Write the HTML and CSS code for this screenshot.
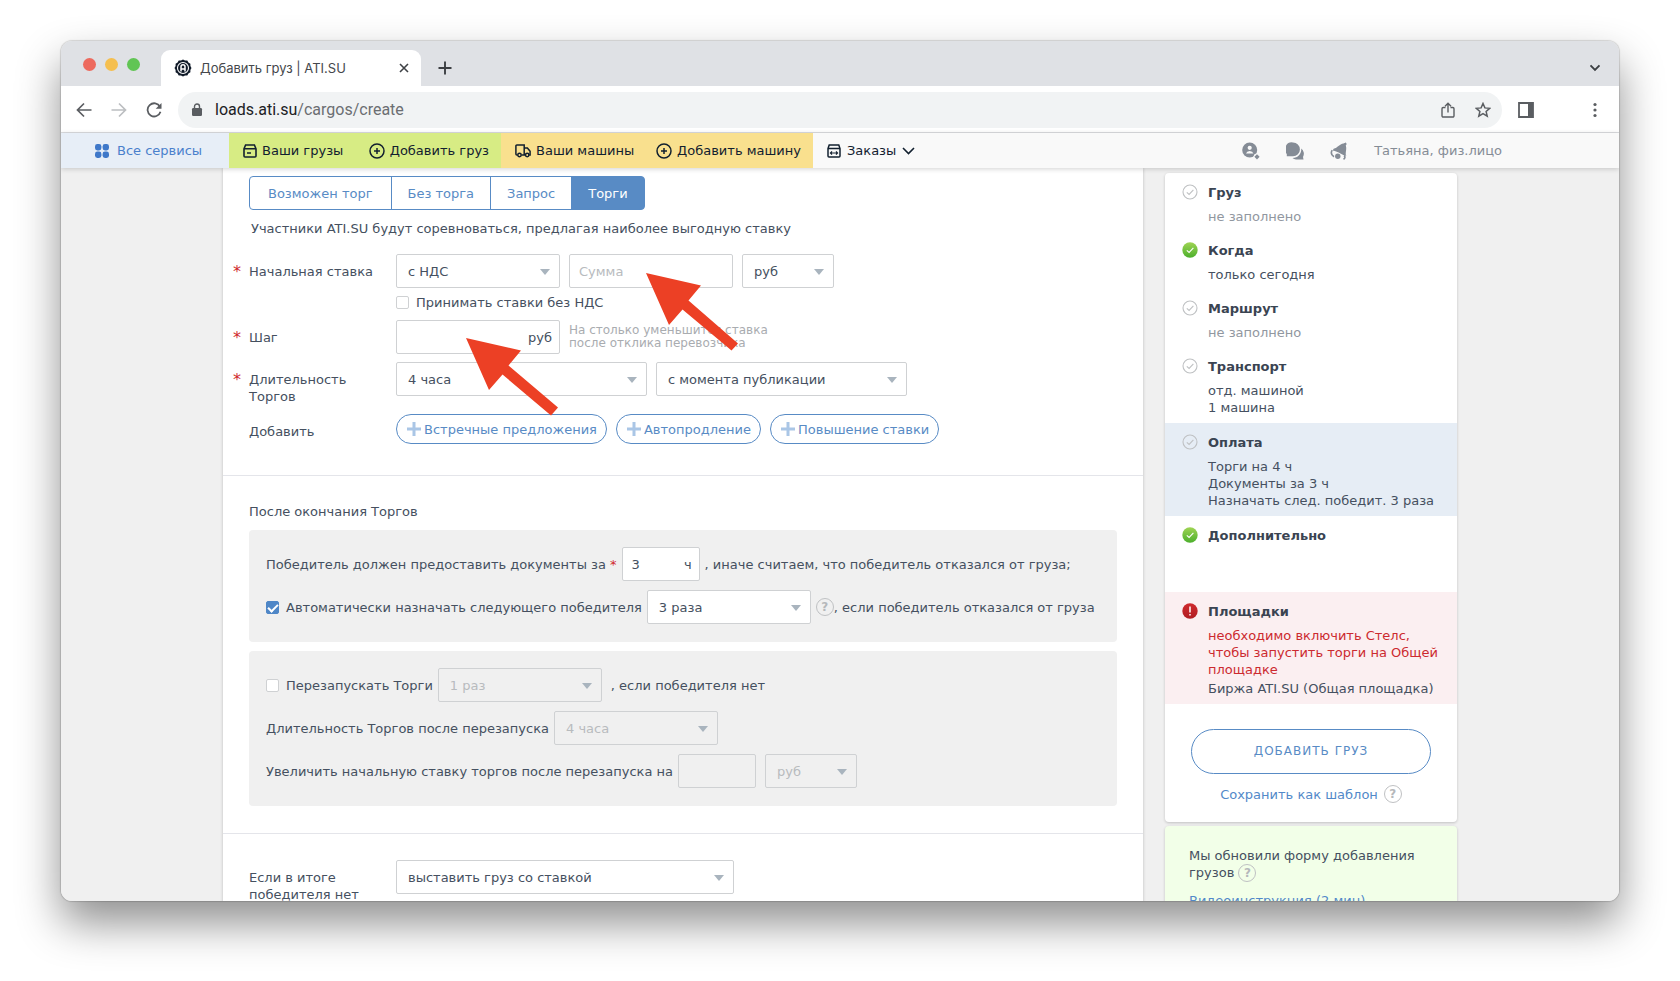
FILE: index.html
```html
<!DOCTYPE html>
<html lang="ru">
<head>
<meta charset="utf-8">
<title>Добавить груз | ATI.SU</title>
<link rel="stylesheet" href="styles.css">
</head>
<body>
<svg class="defs" width="0" height="0" aria-hidden="true">
  <defs>
    <linearGradient id="green" x1="0" y1="0" x2="0" y2="1"><stop offset="0" stop-color="#9fd454"/><stop offset="1" stop-color="#4caf2c"/></linearGradient>
    <linearGradient id="red" x1="0" y1="0" x2="0" y2="1"><stop offset="0" stop-color="#cf2a2e"/><stop offset="1" stop-color="#b01d22"/></linearGradient>
  </defs>
  <symbol id="i-empty" viewBox="0 0 16 16"><circle cx="8" cy="8" r="7" fill="none" stroke="#bfc1c3" stroke-width="1.1"/><path d="M4.8 8.3l2.3 2.2 4.3-4.6" fill="none" stroke="#bfc1c3" stroke-width="1.1"/></symbol>
  <symbol id="i-done" viewBox="0 0 16 16"><circle cx="8" cy="8" r="7.7" fill="url(#green)"/><path d="M4.8 8.3l2.3 2.2 4.3-4.6" fill="none" stroke="#fff" stroke-width="1.1"/></symbol>
  <symbol id="i-error" viewBox="0 0 16 16"><circle cx="8" cy="8" r="7.7" fill="url(#red)"/><path d="M8 3.6v5.8M8 11v1.6" fill="none" stroke="#fff" stroke-width="1.5"/></symbol>
  <symbol id="i-plus" viewBox="0 0 14 14"><path d="M7 0v14M0 7h14" stroke="#aac6e6" stroke-width="3"/></symbol>
  <symbol id="i-plus-circle" viewBox="0 0 16 16"><circle cx="8" cy="8" r="7" fill="none" stroke="currentColor" stroke-width="1.5"/><path d="M8 5v6M5 8h6" stroke="currentColor" stroke-width="1.5"/></symbol>
</svg>

<div class="window">
  <header class="tabstrip">
    <div class="lights"><i class="light red"></i><i class="light yellow"></i><i class="light green"></i></div>
    <div class="tab">
      <svg width="18" height="18" viewBox="0 0 18 18"><path d="M9 .4l2 1.1 2.300.1 1.100 2 2 1.200v2.300l1.100 1.900-1.100 1.900v2.300l-2 1.200-1.100 2-2.300.100-2 1.100-2-1.100-2.300-.100-1.100-2-2-1.200v-2.300L.5 9l1.100-1.900V4.800l2-1.200 1.100-2L7 1.500z" fill="#111b29"/><circle cx="9" cy="9" r="5.500" fill="none" stroke="#fff" stroke-width="1.100"/><path d="M7 12.500V7.700a2 2 0 0 1 4 0v4.800M7 10h4" fill="none" stroke="#fff" stroke-width="1.500"/></svg>
      <span class="tab-title">Добавить груз | ATI.SU</span>
      <button class="icon-btn" aria-label="Закрыть вкладку"><svg width="10" height="10" viewBox="0 0 10 10"><path d="M1 1l8 8M9 1L1 9" stroke="#3f4246" stroke-width="1.600"/></svg></button>
    </div>
    <button class="icon-btn" aria-label="Новая вкладка"><svg width="14" height="14" viewBox="0 0 14 14"><path d="M7 .5v13M.5 7h13" stroke="#3c3f43" stroke-width="1.900"/></svg></button>
    <button class="icon-btn tab-search" aria-label="Поиск вкладок"><svg width="12" height="8" viewBox="0 0 12 8"><path d="M1.500 1.300L6 5.800l4.500-4.500" fill="none" stroke="#3c3f43" stroke-width="1.900"/></svg></button>
  </header>

  <div class="toolbar">
    <button class="icon-btn" aria-label="Назад"><svg width="16" height="16" viewBox="0 0 16 16"><path d="M15.500 8H1.800M8 1.500L1.500 8 8 14.500" fill="none" stroke="#5a5d61" stroke-width="1.700"/></svg></button>
    <button class="icon-btn" aria-label="Вперёд"><svg width="16" height="16" viewBox="0 0 16 16"><path d="M.5 8h13.700M8 1.500L14.500 8 8 14.500" fill="none" stroke="#bcbec1" stroke-width="1.700"/></svg></button>
    <button class="icon-btn" aria-label="Обновить"><svg width="16" height="16" viewBox="0 0 16 16"><path d="M14 4.700A6.600 6.600 0 1 0 14.500 9.800" fill="none" stroke="#5a5d61" stroke-width="1.800"/><path d="M15.500 1v5.800H9.700z" fill="#5a5d61"/></svg></button>
    <div class="omnibox">
      <svg width="12" height="14" viewBox="0 0 12 14"><rect x="1" y="5" width="10" height="8" rx="1.200" fill="#5a5d61"/><path d="M3.500 6V3.500a2.500 2.500 0 0 1 5 0V6" fill="none" stroke="#5a5d61" stroke-width="1.400"/></svg>
      <span class="url"><b>loads.ati.su</b>/cargos/create</span>
      <button class="icon-btn" aria-label="Поделиться"><svg width="14" height="16" viewBox="0 0 14 16"><path d="M4.500 5.500H2.200a1.200 1.200 0 0 0-1.200 1.200v7.100A1.200 1.200 0 0 0 2.200 15h9.600a1.200 1.200 0 0 0 1.200-1.200V6.700a1.200 1.200 0 0 0-1.200-1.200H9.500M7 10.500V1.500M4 4.200l3-3 3 3" fill="none" stroke="#5a5d61" stroke-width="1.400"/></svg></button>
      <button class="icon-btn" aria-label="В закладки"><svg width="16" height="16" viewBox="0 0 16 16"><path d="M8 1.500l1.900 4.400 4.800.4-3.600 3.200 1.100 4.700L8 11.700l-4.200 2.500 1.100-4.700L1.300 6.300l4.800-.4z" fill="none" stroke="#5a5d61" stroke-width="1.500"/></svg></button>
    </div>
    <button class="icon-btn" aria-label="Боковая панель"><svg width="16" height="16" viewBox="0 0 16 16"><path d="M1 1h14v14H1z" fill="none" stroke="#5a5d61" stroke-width="1.800"/><path d="M10 1h5v14h-5z" fill="#5a5d61"/></svg></button>
    <button class="icon-btn menu" aria-label="Меню"><svg width="4" height="16" viewBox="0 0 4 16" fill="#5a5d61"><circle cx="2" cy="2.500" r="1.600"/><circle cx="2" cy="8" r="1.600"/><circle cx="2" cy="13.500" r="1.600"/></svg></button>
  </div>

  <nav class="sitenav">
    <a href="#" class="services"><svg width="14" height="14" viewBox="0 0 14 14" fill="#3f78c9"><rect x="0" y="0" width="6.400" height="6.400" rx="2.400"/><rect x="7.600" y="0" width="6.400" height="6.400" rx="2.400"/><rect x="0" y="7.600" width="6.400" height="6.400" rx="2.400"/><rect x="7.600" y="7.600" width="6.400" height="6.400" rx="2.400"/></svg>Все сервисы</a>
    <div class="group cargo">
      <a href="#"><svg width="14" height="14" viewBox="0 0 14 14" fill="none" stroke="currentColor" stroke-width="1.600"><path d="M1 4.800L2.600 1h8.800L13 4.800V12a1 1 0 0 1-1 1H2a1 1 0 0 1-1-1zM1 4.800h12M4 9h4"/></svg>Ваши грузы</a>
      <a href="#"><svg width="16" height="16"><use href="#i-plus-circle"/></svg>Добавить груз</a>
    </div>
    <div class="group trucks">
      <a href="#"><svg width="16" height="14" viewBox="0 0 16 14" fill="none" stroke="currentColor" stroke-width="1.500"><path d="M2.500 11H1.900a1 1 0 0 1-1-1V2a1 1 0 0 1 1-1h7.300v10H6.500M9.200 4h3.200l2.700 3.300V11h-1M9.200 11h1"/><circle cx="4.500" cy="11" r="1.700"/><circle cx="12.200" cy="11" r="1.700"/></svg>Ваши машины</a>
      <a href="#"><svg width="16" height="16"><use href="#i-plus-circle"/></svg>Добавить машину</a>
    </div>
    <a href="#" class="orders"><svg width="14" height="14" viewBox="0 0 14 14" fill="none" stroke="currentColor" stroke-width="1.500"><path d="M1 4.500L2.200 1h9.600L13 4.500V12a1 1 0 0 1-1 1H2a1 1 0 0 1-1-1zM1 4.500h12"/><path d="M3.500 9h7M5 7.400L3.400 9 5 10.600M9 7.400L10.600 9 9 10.600" stroke-width="1.100"/></svg>Заказы<svg width="13" height="8" viewBox="0 0 13 8"><path d="M1 1l5.500 5.500L12 1" fill="none" stroke="currentColor" stroke-width="1.600"/></svg></a>
    <div class="account">
      <a href="#" aria-label="Контакты"><svg width="18" height="18" viewBox="0 0 18 18" fill="#858c96"><circle cx="7.700" cy="8" r="7.500"/><circle cx="7.700" cy="5.800" r="2.100" fill="#f9f9f9"/><path d="M4 11.500a3.800 3.300 0 0 1 7.400 0z" fill="#f9f9f9"/><circle cx="15" cy="15" r="3.400" fill="#f9f9f9"/><path d="M15 12.200l2.600 2.600L15 17.400l-2.600-2.600z"/></svg></a>
      <a href="#" aria-label="Сообщения"><svg width="18" height="18" viewBox="0 0 18 18" fill="#858c96"><path d="M17.500 17.500H10a6 6 0 0 1-3.500-1.600C12 16 15.500 12 15.300 6.600A6.500 6.500 0 0 1 17 15z"/><path d="M7 .5a6.800 6.800 0 1 1 0 13.800H.8V12A6.900 6.900 0 0 1 7 .5z"/></svg></a>
      <a href="#" aria-label="Уведомления"><svg width="18" height="18" viewBox="0 0 18 18" fill="#858c96"><path d="M13.500 1.500L15.800.4l.9 1.600-.9 1.600c1.100 3-.1 5.600-.1 8.700l.6 1.500c-2-.3-3.900-1.300-5.900-2.400C8.200 10.200 5.600 9 2.600 8.500l1.100-1.700C7.600 5.900 9.300 2 13.500 1.500z"/><circle cx="7.800" cy="14.300" r="2.700"/><path d="M2.200 8.200C.6 10.800 1.600 13.300 4 14.800M14 13.500c1.400 1 1.200 2.800-.5 3.800" fill="none" stroke="#858c96" stroke-width="1.600"/></svg></a>
      <a href="#" class="user">Татьяна, физ.лицо</a>
    </div>
  </nav>

  <div class="page">
    <div class="layout">
      <main class="form">
        <section class="section">
          <div class="segments">
            <button>Возможен торг</button><button>Без торга</button><button>Запрос</button><button class="active">Торги</button>
          </div>
          <p class="lead">Участники ATI.SU будут соревноваться, предлагая наиболее выгодную ставку</p>
          <div class="row">
            <label class="label required" for="vat">Начальная ставка</label>
            <div class="fields">
              <div class="select w-m"><select id="vat"><option>с НДС</option></select></div>
              <input class="input w-m" type="text" placeholder="Сумма" aria-label="Сумма">
              <div class="select w-s"><select aria-label="Валюта"><option>руб</option></select></div>
            </div>
          </div>
          <div class="row row-check">
            <label class="check"><input type="checkbox">Принимать ставки без НДС</label>
          </div>
          <div class="row">
            <label class="label required" for="step">Шаг</label>
            <div class="fields">
              <div class="unit w-m"><input id="step" class="input" type="text"><span>руб</span></div>
              <p class="hint">На столько уменьшится ставка<br>после отклика перевозчика</p>
            </div>
          </div>
          <div class="row row-next">
            <label class="label required" for="length">Длительность<br>Торгов</label>
            <div class="fields">
              <div class="select w-l"><select id="length"><option>4 часа</option></select></div>
              <div class="select w-l"><select aria-label="Начало"><option>с момента публикации</option></select></div>
            </div>
          </div>
          <div class="row row-add">
            <span class="label">Добавить</span>
            <div class="fields">
              <button class="pill"><svg width="14" height="14"><use href="#i-plus"/></svg>Встречные предложения</button>
              <button class="pill"><svg width="14" height="14"><use href="#i-plus"/></svg>Автопродление</button>
              <button class="pill"><svg width="14" height="14"><use href="#i-plus"/></svg>Повышение ставки</button>
            </div>
          </div>
        </section>

        <section class="section after">
          <h2>После окончания Торгов</h2>
          <div class="panel">
            <div class="line">
              <label for="docs">Победитель должен предоставить документы за <em>*</em></label>
              <div class="unit w-xs"><input id="docs" class="input" type="text" value="3"><span>ч</span></div>
              <span>, иначе считаем, что победитель отказался от груза;</span>
            </div>
            <div class="line">
              <label class="check"><input type="checkbox" checked>Автоматически назначать следующего победителя</label>
              <div class="select w-m"><select aria-label="Количество назначений"><option>3 раза</option></select></div>
              <div class="tail"><button class="help" aria-label="Справка">?</button>, если победитель отказался от груза</div>
            </div>
          </div>
          <div class="panel">
            <div class="line">
              <label class="check"><input type="checkbox">Перезапускать Торги</label>
              <div class="select w-m"><select disabled aria-label="Количество перезапусков"><option>1 раз</option></select></div>
              <span class="apart">, если победителя нет</span>
            </div>
            <div class="line">
              <label for="relength">Длительность Торгов после перезапуска</label>
              <div class="select w-m"><select id="relength" disabled><option>4 часа</option></select></div>
            </div>
            <div class="line">
              <label for="raise">Увеличить начальную ставку торгов после перезапуска на</label>
              <input id="raise" class="input w-xs" type="text" disabled>
              <div class="select w-s apart"><select disabled aria-label="Валюта"><option>руб</option></select></div>
            </div>
          </div>
        </section>

        <section class="section last">
          <div class="row">
            <label class="label" for="nowinner">Если в итоге<br>победителя нет</label>
            <div class="fields"><div class="select w-xl"><select id="nowinner"><option>выставить груз со ставкой</option></select></div></div>
          </div>
        </section>

        <svg class="arrow arrow-step" width="94" height="80" viewBox="0 0 94 80"><path d="M0 0L55 12.500 42.500 27.500 92 69.500 85 77.500 36.500 36.500 23 52z" fill="#ec4025"/></svg>
        <svg class="arrow arrow-sum" width="94" height="80" viewBox="0 0 94 80"><path d="M0 0L55 12.500 42.500 27.500 92 70.500 85.500 77.500 36.500 36.500 23 52z" fill="#ec4025"/></svg>
      </main>

      <aside class="side">
        <div class="card">
          <div class="step"><svg width="16" height="16"><use href="#i-empty"/></svg><div><h3>Груз</h3><p class="muted">не заполнено</p></div></div>
          <div class="step"><svg width="16" height="16"><use href="#i-done"/></svg><div><h3>Когда</h3><p>только сегодня</p></div></div>
          <div class="step"><svg width="16" height="16"><use href="#i-empty"/></svg><div><h3>Маршрут</h3><p class="muted">не заполнено</p></div></div>
          <div class="step long"><svg width="16" height="16"><use href="#i-empty"/></svg><div><h3>Транспорт</h3><p>отд. машиной<br>1 машина</p></div></div>
          <div class="step long current"><svg width="16" height="16"><use href="#i-empty"/></svg><div><h3>Оплата</h3><p>Торги на 4 ч<br>Документы за 3 ч<br>Назначать след. победит. 3 раза</p></div></div>
          <div class="step extra"><svg width="16" height="16"><use href="#i-done"/></svg><div><h3>Дополнительно</h3></div></div>
          <div class="step long invalid"><svg width="16" height="16"><use href="#i-error"/></svg><div><h3>Площадки</h3><p class="error">необходимо включить Стелс,<br>чтобы запустить торги на Общей<br>площадке</p><p>Биржа ATI.SU (Общая площадка)</p></div></div>
          <div class="actions">
            <button class="submit">ДОБАВИТЬ ГРУЗ</button>
            <div class="template"><a href="#">Сохранить как шаблон</a><button class="help" aria-label="Справка">?</button></div>
          </div>
        </div>
        <div class="card news">
          <p>Мы обновили форму добавления<br>грузов <button class="help" aria-label="Справка">?</button></p>
          <a href="#">Видеоинструкция (2 мин)</a>
        </div>
      </aside>
    </div>
  </div>
</div>
</body>
</html>
```
FILE: styles.css
```css
* { box-sizing: border-box; }
body {
  margin: 0;
  height: 100vh;
  padding: 41px 61px 80px;
  overflow: hidden;
  background: #fff;
  color: #455060;
  font: 13px/17px Verdana, "DejaVu Sans", sans-serif;
}
p, h2, h3 { margin: 0; font-size: 13px; font-weight: 400; }
a { color: #5289c9; text-decoration: none; }
button, input, select { font: inherit; color: inherit; margin: 0; }
button { background: none; border: 0; padding: 0; }
svg { display: block; flex: none; }
.defs { position: absolute; }

.window {
  height: 100%;
  display: flex;
  flex-direction: column;
  border-radius: 11px;
  overflow: hidden;
  background: #f0f0f0;
  box-shadow: 0 0 1px 1px rgba(0, 0, 0, .14), 0 22px 44px rgba(0, 0, 0, .44);
}

/* Browser chrome */
.icon-btn { display: flex; align-items: center; justify-content: center; }
.tabstrip {
  flex: none;
  height: 45px;
  display: flex;
  align-items: flex-end;
  padding: 0 18px 0 22px;
  background: #dfe1e5;
}
.tabstrip > .icon-btn { height: 36px; margin-left: 17px; }
.tabstrip > .tab-search { margin-left: auto; }
.lights { display: flex; gap: 9px; height: 43px; align-items: center; margin-right: 21px; }
.light { width: 13px; height: 13px; border-radius: 50%; }
.light.red { background: #ed6a5e; }
.light.yellow { background: #f5bf4f; }
.light.green { background: #61c554; }
.tab {
  width: 260px;
  height: 36px;
  display: flex;
  align-items: center;
  gap: 8px;
  padding: 0 12px 0 13px;
  border-radius: 9px 9px 0 0;
  background: #fff;
  font: 13px/18px Inter, sans-serif;
  color: #45484c;
}
.tab-title { flex: 1; }
.toolbar {
  flex: none;
  height: 47px;
  display: flex;
  align-items: center;
  gap: 19px;
  padding: 1px 22px 0 15px;
  background: #fff;
  border-bottom: 1px solid #dcdde0;
}
.omnibox {
  flex: 1;
  height: 36px;
  display: flex;
  align-items: center;
  gap: 12px;
  margin: 0 -3px;
  padding: 0 11px 0 13px;
  border-radius: 18px;
  background: #f1f3f4;
}
.omnibox .icon-btn + .icon-btn { margin-left: 8px; }
.url { flex: 1; font: 16px/20px Roboto, sans-serif; color: #6b6e72; }
.url b { font-weight: 400; color: #202124; }
.toolbar > .menu { margin-left: 40px; }

/* Site navigation */
.sitenav {
  position: relative;
  z-index: 1;
  flex: none;
  height: 35px;
  display: flex;
  background: #f9f9f9;
  color: #12202f;
  box-shadow: 0 1px 5px rgba(0, 0, 0, .18);
}
.sitenav a { display: flex; align-items: center; gap: 5px; color: inherit; white-space: nowrap; }
.sitenav .services { width: 168px; gap: 8px; padding-left: 34px; background: #e7eef7; color: #4a80cc; }
.group { display: flex; justify-content: space-between; padding: 0 12px 0 14px; }
.cargo { width: 272px; background: #d7ec84; }
.trucks { width: 312px; background: #f9e08e; }
.sitenav .orders { gap: 6px; padding-left: 14px; }
.account { display: flex; align-items: center; gap: 26px; margin-left: auto; padding-right: 117px; }
.sitenav .user { color: #858c96; }

/* Page */
.page { flex: 1; min-height: 0; overflow: hidden; padding: 0 20px; background: #f0f0f0; }
.layout { display: flex; gap: 22px; align-items: flex-start; max-width: 1234px; margin: 0 auto; }
.form { position: relative; flex: 1; min-width: 0; background: #fff; box-shadow: 0 0 3px rgba(0, 0, 0, .22); }
.section { padding: 8px 26px 31px; }
.section + .section { border-top: 1px solid #e4e5ea; }
.section.after { padding: 27px 26px 27px; }
.section.last { padding-top: 26px; }

.segments { display: flex; }
.segments button { height: 34px; padding: 0 16px; border: 1px solid #588bc5; color: #588bc5; }
.segments button + button { margin-left: -1px; }
.segments button:first-child { padding: 0 18px; border-radius: 4px 0 0 4px; }
.segments button.active { background: #588bc5; color: #fff; border-radius: 0 4px 4px 0; }
.lead { margin: 10px 0 17px; padding-left: 2px; }

.row { display: flex; }
.row-check { margin: 6px 0 9px; padding-left: 147px; }
.row-next { margin-top: 8px; }
.row-add { margin-top: 9px; }
.label { position: relative; width: 147px; padding-top: 9px; flex: none; }
.required::before { content: "*"; position: absolute; left: -16px; color: #d0282d; font-size: 16px; }
.fields { display: flex; gap: 9px; }
.w-xs { width: 78px; }
.w-s { width: 92px; }
.w-m { width: 164px; }
.w-l { width: 251px; }
.w-xl { width: 338px; }

.select { position: relative; flex: none; }
.select::after {
  content: "";
  position: absolute;
  right: 10px;
  top: 15px;
  border: 5px solid transparent;
  border-top: 6px solid #a9b4be;
  border-bottom: 0;
  pointer-events: none;
}
.select select, .input {
  display: block;
  height: 34px;
  border: 1px solid #cfd1d3;
  border-radius: 2px;
  background: #fff;
  padding: 0 11px;
  outline: 0;
}
.select select { width: 100%; appearance: none; }
.input { padding: 0 9px; }
.input::placeholder { color: #b8bbbe; opacity: 1; }
.select select:disabled, .input:disabled { background: transparent; color: #b8bbbe; opacity: 1; }
.unit { position: relative; flex: none; }
.unit .input { width: 100%; }
.unit span { position: absolute; right: 8px; top: 9px; }
.hint { align-self: center; font-size: 12px; line-height: 13px; color: #a9acb0; }

.check { display: flex; align-items: center; gap: 7px; }
.check input {
  appearance: none;
  flex: none;
  width: 13px;
  height: 13px;
  border: 1px solid #cfd1d3;
  border-radius: 2px;
  background: #fff;
}
.check input:checked { display: grid; place-items: start center; background: #4f87c7; border-color: #4f87c7; }
.check input:checked::after {
  content: "";
  width: 4px;
  height: 8px;
  border: solid #fff;
  border-width: 0 2px 2px 0;
  transform: rotate(45deg);
}

.pill {
  height: 30px;
  display: flex;
  align-items: center;
  gap: 3px;
  padding: 0 9px 0 10px;
  border: 1px solid #588bc5;
  border-radius: 15px;
  color: #588bc5;
}

.after h2 { margin-bottom: 10px; }
.panel { display: flex; flex-direction: column; gap: 9px; padding: 17px 17px 18px; border-radius: 4px; background: #f0f0f0; }
.panel + .panel { margin-top: 9px; }
.line { display: flex; align-items: center; gap: 5px; white-space: nowrap; }
.line em { font-style: normal; color: #d0282d; }
.line .tail { display: flex; align-items: center; }
.line .apart { margin-left: 4px; }
.help {
  width: 18px;
  height: 18px;
  border: 1px solid #bfc1c3;
  border-radius: 50%;
  background: transparent;
  color: #b5b8bb;
  font-size: 12px;
  font-weight: 700;
  line-height: 16px;
  text-align: center;
}

.arrow { position: absolute; }
.arrow-step { left: 243px; top: 170px; }
.arrow-sum { left: 423px; top: 105px; }

/* Sidebar */
.side { width: 292px; flex: none; padding-top: 5px; }
.card { border-radius: 4px; background: #fff; box-shadow: 0 1px 3px rgba(0, 0, 0, .2); overflow: hidden; }
.step { display: flex; gap: 10px; padding: 11px 17px 6px; white-space: nowrap; }
.step.long { padding-bottom: 7px; }
.step h3 { font-weight: 700; margin-bottom: 7px; color: #3a4452; }
.step p + p { margin-top: 2px; }
.step .muted { color: #9197a0; }
.step .error { color: #cc2a2f; }
.current { background: #e6edf5; }
.extra { min-height: 76px; }
.invalid { background: #fbeff1; }
.actions { padding: 25px 26px 19px; }
.submit { width: 100%; height: 45px; border: 1px solid #588bc5; border-radius: 23px; color: #588bc5; font-size: 12px; letter-spacing: 1px; }
.template { display: flex; justify-content: center; align-items: center; gap: 6px; margin-top: 11px; }
.news { margin-top: 4px; padding: 21px 24px; background: #f2ffe8; }
.news a { display: block; margin-top: 10px; }
```
